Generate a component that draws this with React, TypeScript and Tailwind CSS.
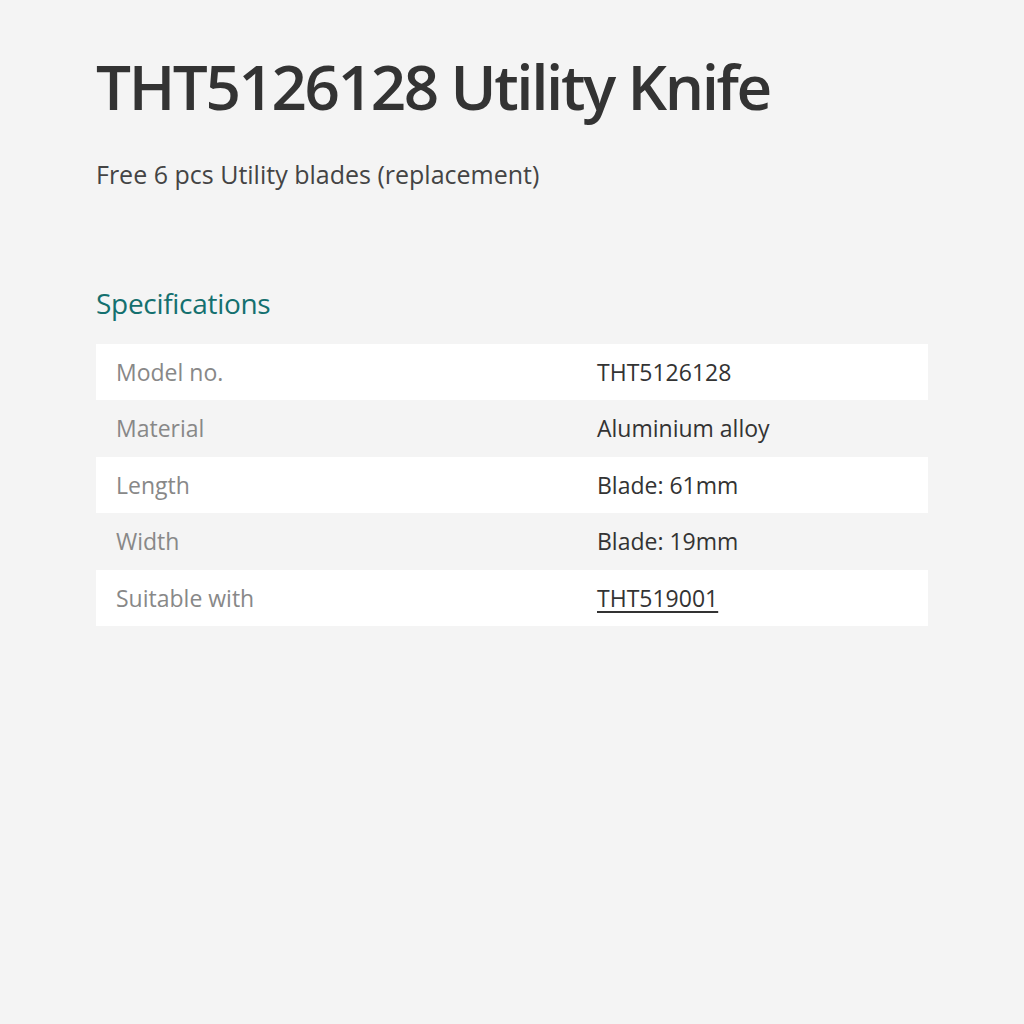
export default function App() {
  const rows = [
    { label: "Model no.", value: "THT5126128" },
    { label: "Material", value: "Aluminium alloy" },
    { label: "Length", value: "Blade: 61mm" },
    { label: "Width", value: "Blade: 19mm" },
    { label: "Suitable with", value: "THT519001", link: true },
  ];

  return (
    <div className="min-h-[1024px] w-[1024px] bg-[#f4f4f4] px-24 pt-[44px] font-['Open_Sans',sans-serif] text-[#333]">
      <h1 className="text-[62px] font-semibold leading-[84px] tracking-[-2.4px] text-[#333]">
        THT5126128 Utility Knife
      </h1>
      <p className="mt-[30px] text-[25px] leading-[32px] text-[#444]">Free 6 pcs Utility blades (replacement)</p>

      <h2 className="mt-[95px] text-[28px] font-medium leading-[36px] tracking-[-0.3px] text-[#14706f]">
        Specifications
      </h2>

      <div className="mt-[23px] w-[832px]">
        {rows.map((r, i) => (
          <div
            key={r.label}
            className={`flex h-[56.4px] items-center text-[23px] ${i % 2 === 0 ? "bg-white" : "bg-[#f4f4f4]"}`}
          >
            <div className="w-[501px] pl-5 text-[#888]">{r.label}</div>
            <div className="flex-1">
              {r.link ? <a className="text-[#333] underline underline-offset-4">{r.value}</a> : r.value}
            </div>
          </div>
        ))}
      </div>
    </div>
  );
}
